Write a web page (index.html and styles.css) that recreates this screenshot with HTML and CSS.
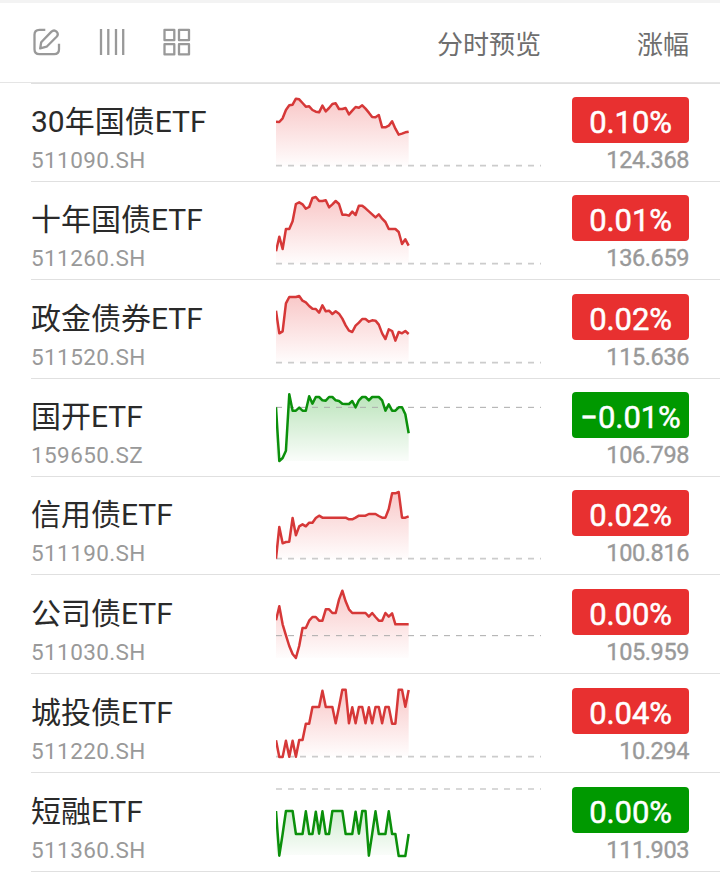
FILE: index.html
```html
<!DOCTYPE html>
<html lang="zh-CN">
<head>
<meta charset="utf-8">
<title>ETF</title>
<link rel="stylesheet" href="styles.css">
</head>
<body>
<header class="toolbar">
  <div class="tools">
    <svg class="icon" width="28" height="28" viewBox="0 0 28 28"><path d="M12.3 1.8H6.4Q1.5 1.8 1.5 6.7V21.3Q1.5 26.2 6.4 26.2H21.1Q26 26.2 26 21.3V15.8M7.2 20.4L8.2 14.2L18.2 3.9Q21 1.2 23.5 3.6Q26 6 23.6 8.8L13.6 18.7Z"/></svg>
    <svg class="icon" width="28" height="28" viewBox="0 0 28 28"><path d="M3 1V27M10.3 1V27M18 1V27M25.2 1V27"/></svg>
    <svg class="icon" width="28" height="28" viewBox="0 0 28 28"><path d="M1.5 1.8H11.3V12.2H1.5ZM16 1.8H26V12.2H16ZM1.5 16.2H11.3V26.4H1.5ZM16 16.2H26V26.4H16Z"/></svg>
  </div>
  <span class="col-preview">分时预览</span>
  <span class="col-change">涨幅</span>
</header>
<main class="list" id="list"></main>
<svg class="defs" width="0" height="0">
  <defs>
    <linearGradient id="fade-up" gradientUnits="userSpaceOnUse" x1="0" y1="40" x2="0" y2="243"><stop offset="0" stop-color="#e83030" stop-opacity=".27"/><stop offset="1" stop-color="#e83030" stop-opacity=".01"/></linearGradient>
    <linearGradient id="fade-down" gradientUnits="userSpaceOnUse" x1="0" y1="40" x2="0" y2="243"><stop offset="0" stop-color="#009900" stop-opacity=".27"/><stop offset="1" stop-color="#009900" stop-opacity=".02"/></linearGradient>
  </defs>
</svg>
<script src="app.js"></script>
</body>
</html>
```
FILE: styles.css
```css
body {
  margin: 0;
  background: #fff;
  font-family: Roboto, "Noto Sans CJK SC", sans-serif;
  overflow: hidden;
}
.toolbar {
  box-sizing: border-box;
  display: flex;
  align-items: center;
  height: 83px;
  padding: 0 31px 0 33px;
  border-top: 3px solid #f3f3f3;
  border-bottom: 1px solid #e5e5e5;
  color: #6e6e6e;
  font-size: 26px;
}
.tools {
  display: flex;
  gap: 37px;
  flex: 1;
  padding-bottom: 1px;
}
.icon {
  display: block;
  fill: none;
  stroke: #999;
  stroke-width: 2.3;
  stroke-linejoin: round;
}
.col-preview {
  width: 200px;
  line-height: 38px;
  padding-top: 4px;
}
.col-change {
  line-height: 38px;
  padding-top: 4px;
}
.list {
  margin-left: 31px;
  border-top: 1px solid #e0e0e0;
}
.row {
  box-sizing: border-box;
  display: grid;
  grid-template-columns: 245px 265px 1fr;
  height: 98px;
  padding-right: 31px;
  border-bottom: 1px solid #e0e0e0;
}
.row.tall {
  height: 99px;
}
.name {
  padding-top: 17px;
  line-height: 42px;
  font-size: 30px;
  color: #2a2a2a;
  white-space: nowrap;
}
.code {
  line-height: 30px;
  padding-top: 2px;
  font-size: 22.5px;
  letter-spacing: .4px;
  color: #999;
}
.chart {
  display: block;
  align-self: end;
  margin-bottom: -1px;
}
.line {
  fill: none;
  stroke-width: 7.5;
  stroke-linejoin: round;
}
.up .line { stroke: #d63838; }
.down .line { stroke: #0b900b; }
.up .area { fill: url(#fade-up); }
.down .area { fill: url(#fade-down); }
.base {
  stroke: #ccc;
  stroke-width: 5;
  stroke-dasharray: 18 18;
}
.base.thin {
  stroke: #aaa;
  stroke-width: 3;
}
.quote {
  display: flex;
  flex-direction: column;
  align-items: flex-end;
  padding-top: 13px;
}
.badge {
  width: 117px;
  height: 46px;
  border-radius: 4px;
  line-height: 51px;
  text-align: center;
  font-size: 31px;
  letter-spacing: -.1px;
  color: #fff;
  -webkit-text-stroke: .5px #fff;
  white-space: nowrap;
}
.up .badge { background: #e83030; }
.down .badge { background: #009900; }
.price {
  line-height: 28px;
  padding-top: 3px;
  font-size: 23.5px;
  letter-spacing: -.4px;
  color: #999;
  -webkit-text-stroke: .35px #999;
}
.tall .quote { padding-top: 14px; }
.tall .name { padding-top: 18px; }
```
FILE: app.js
```js
// Chart values are in thirds of a pixel, measured down from the chart's top.
const rows = [
  { name: "30年国债ETF", code: "511090.SH", pct: "0.10%", price: "124.368", dir: "up", base: 242, h: 97,
    y: [110,111,100,75,61,59,41,43,54,65,64,75,80,82,62,79,69,57,55,72,72,69,88,77,66,68,61,71,83,96,97,90,127,127,122,109,131,149,146,142,140] },
  { name: "十年国债ETF", code: "511260.SH", pct: "0.01%", price: "136.659", dir: "up", base: 242, h: 97,
    y: [205,161,198,138,138,115,63,58,64,77,72,45,42,54,54,52,73,64,54,63,95,95,98,86,96,68,68,76,85,94,103,94,107,117,138,138,138,147,183,169,188] },
  { name: "政金债券ETF", code: "511520.SH", pct: "0.02%", price: "115.636", dir: "up", base: 242, h: 97, tall: true,
    y: [86,154,148,64,45,45,45,42,56,61,72,80,81,92,70,88,86,96,88,95,110,130,146,150,131,122,111,111,119,115,116,128,154,171,142,147,176,150,154,147,156] },
  { name: "国开ETF", code: "159650.SZ", pct: "−0.01%", price: "106.798", dir: "down", base: 82, thin: true, h: 97,
    y: [82,243,234,212,43,92,92,83,92,92,49,71,51,51,61,62,51,51,61,63,71,72,72,63,82,61,51,51,61,51,51,51,61,92,73,92,92,82,82,103,160] },
  { name: "信用债ETF", code: "511190.SH", pct: "0.02%", price: "100.816", dir: "up", base: 242, h: 97,
    y: [242,147,196,192,191,120,172,145,139,145,134,134,120,113,119,119,119,119,119,119,119,119,124,124,119,113,113,113,108,108,108,114,119,119,93,46,46,42,119,119,115] },
  { name: "公司债ETF", code: "511030.SH", pct: "0.00%", price: "105.959", dir: "up", base: 176, thin: true, h: 97, tall: true,
    y: [130,88,142,175,207,231,243,207,153,153,131,120,120,131,131,97,97,108,108,68,41,73,97,108,108,108,108,108,119,108,120,131,131,108,119,109,142,142,142,142,142] },
  { name: "城投债ETF", code: "511220.SH", pct: "0.04%", price: "10.294", dir: "up", base: 245, h: 98, tall: true,
    y: [196,246,246,197,245,197,245,195,195,146,146,96,96,96,47,96,96,96,145,96,44,44,145,97,145,96,96,145,97,145,96,96,145,96,96,146,146,44,44,95,45] },
  { name: "短融ETF", code: "511360.SH", pct: "0.00%", price: "111.903", dir: "down", base: 45, h: 98, tall: true,
    y: [111,245,180,111,111,111,180,180,180,112,180,180,113,179,112,180,180,111,111,111,111,180,180,180,113,179,111,111,245,180,112,180,180,180,112,180,180,246,246,246,180] }
];

document.getElementById("list").innerHTML = rows.map(r => {
  const pts = r.y.map((v, i) => `${(i * 9.95).toFixed(1)},${v}`).join(" ");
  return `<section class="row ${r.dir}${r.tall ? " tall" : ""}">
    <div><div class="name">${r.name}</div><div class="code">${r.code}</div></div>
    <svg class="chart" width="265" height="${r.h}" viewBox="0 0 795 ${r.h * 3}">
      <polygon class="area" points="0,243 ${pts} 398,243"/>
      <line class="base${r.thin ? " thin" : ""}" x1="0" x2="795" y1="${r.base}" y2="${r.base}"/>
      <polyline class="line" points="${pts}"/>
    </svg>
    <div class="quote"><div class="badge">${r.pct}</div><div class="price">${r.price}</div></div>
  </section>`;
}).join("");
```
